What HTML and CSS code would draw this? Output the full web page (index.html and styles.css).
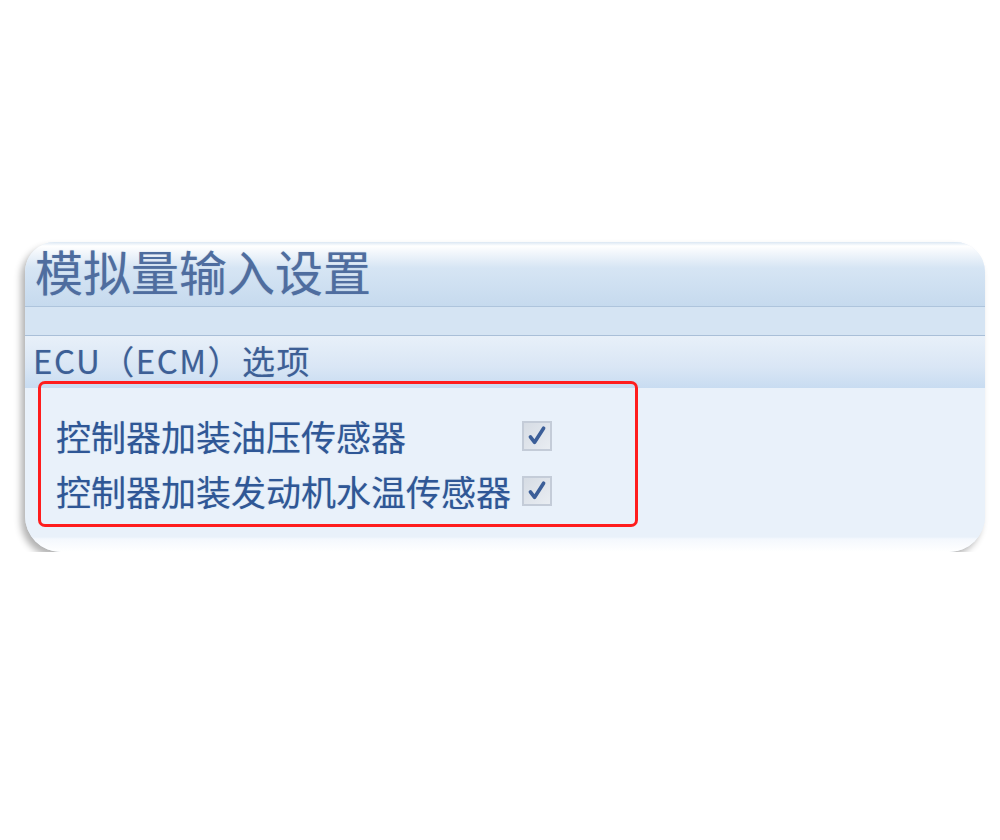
FILE: index.html
```html
<!DOCTYPE html>
<html lang="zh-CN">
<head>
  <meta charset="UTF-8" />
  <title>模拟量输入设置</title>
  <link rel="stylesheet" href="styles.css">
</head>
<body>
  <div class="stage">
    <section class="panel">
      <header class="title-bar">模拟量输入设置</header>
      <div class="sub-bar"></div>
      <div class="group-header">ECU（ECM）选项</div>
      <div class="group-body">
        <div class="highlight">
          <div class="option-row">
            <span class="option-label">控制器加装油压传感器</span>
            <span class="check">
              <svg viewBox="0 0 16 16" width="16" height="16"><path d="M3.6 8.6 L6.4 12.2 L12.4 2.8" /></svg>
            </span>
          </div>
          <div class="option-row">
            <span class="option-label">控制器加装发动机水温传感器</span>
            <span class="check">
              <svg viewBox="0 0 16 16" width="16" height="16"><path d="M3.6 8.6 L6.4 12.2 L12.4 2.8" /></svg>
            </span>
          </div>
        </div>
      </div>
    </section>
  </div>
</body>
</html>
```

FILE: styles.css
```css
body {
  margin: 0;
  padding: 0;
  background: #ffffff;
  font-family: "Noto Sans CJK SC", "Noto Sans", sans-serif;
}

.stage {
  padding: 242px 15px 0 25px;
}

.panel {
  width: 960px;
  height: 310px;
  border-radius: 30px 30px 36px 36px;
  background: #e9f1fa;
  box-shadow: -4px 5px 7px rgba(0, 0, 0, 0.3);
  display: flex;
  flex-direction: column;
}

.title-bar {
  height: 65px;
  box-sizing: border-box;
  padding-left: 10px;
  border-radius: 30px 30px 0 0;
  font-size: 48px;
  line-height: 56px;
  color: #4f6d9f;
  background: linear-gradient(to bottom, #dbe7f3 0px, #ffffff 4px, #f3f7fc 10px, #d6e5f4 26px, #c6daee 100%);
  border-bottom: 1px solid #aec4dc;
  text-shadow: 0 0 1px rgba(79, 109, 159, 0.5);
}

.sub-bar {
  height: 28px;
  background: #d5e4f3;
  border-bottom: 1px solid #a9bfd8;
}

.group-header {
  height: 52px;
  box-sizing: border-box;
  padding-left: 8px;
  font-size: 33px;
  line-height: 48px;
  letter-spacing: 1.5px;
  color: #3d5f96;
  background: linear-gradient(to bottom, #e8f0f9, #d9e6f5 60%, #c8dcf1);
  text-shadow: 0 0 1px rgba(61, 95, 150, 0.4);
}

.group-body {
  flex: 1;
  border-radius: 0 0 36px 36px;
  background: linear-gradient(to bottom, #e9f1fa calc(100% - 15px), #f4f8fd calc(100% - 13px), #ffffff 100%);
}

.highlight {
  width: 600px;
  height: 146px;
  box-sizing: border-box;
  margin: -7px 0 0 13px;
  border: 3px solid #ff1d1d;
  border-radius: 7px;
  padding: 24px 0 0 15px;
}

.option-row {
  display: grid;
  grid-template-columns: 466px 30px;
  align-items: center;
  height: 55px;
}

.option-label {
  font-size: 35px;
  color: #2f5796;
  white-space: nowrap;
  text-shadow: 0 0 1px rgba(47, 87, 150, 0.4);
}

.check {
  width: 30px;
  height: 30px;
  box-sizing: border-box;
  border: 2px solid #c4ccd8;
  background: linear-gradient(135deg, #d6dce4, #e9edf2);
  display: flex;
  align-items: center;
  justify-content: center;
}

.check svg {
  width: 24px;
  height: 24px;
}

.check path {
  fill: none;
  stroke: #3b5e98;
  stroke-width: 2.4;
  stroke-linecap: round;
  stroke-linejoin: round;
}
```
